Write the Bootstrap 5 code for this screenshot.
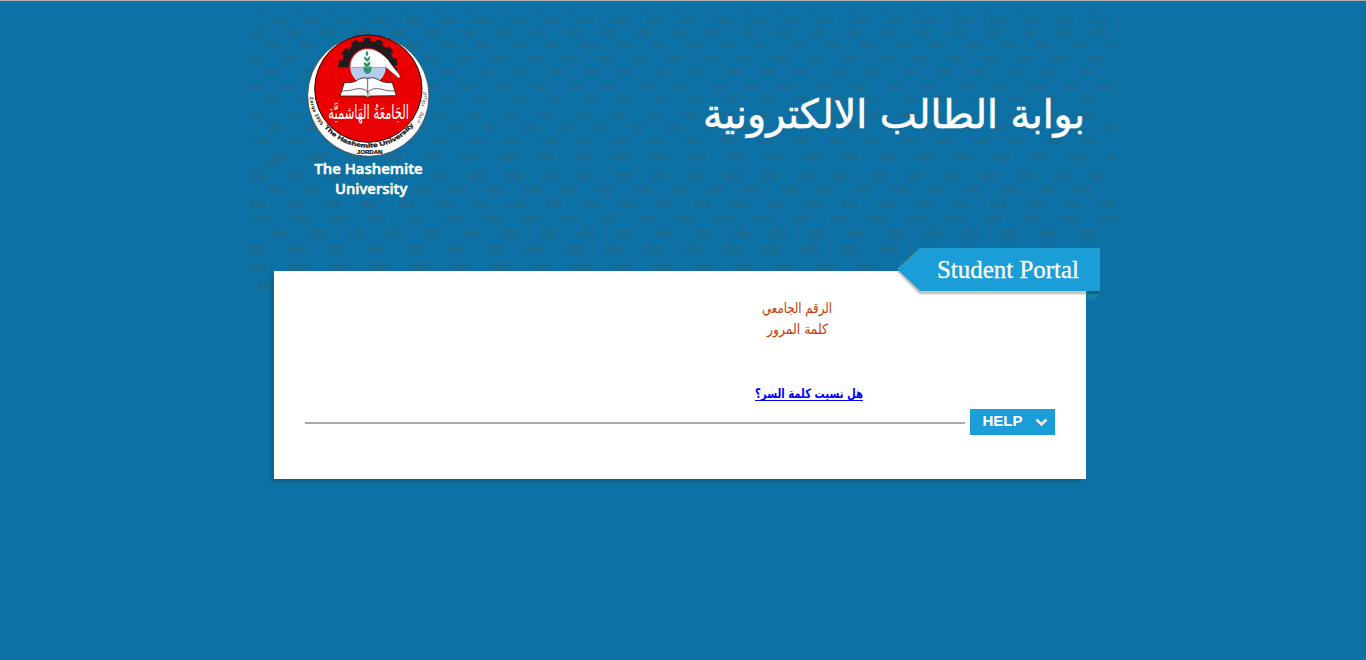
<!DOCTYPE html>
<html lang="ar">
<head>
<meta charset="utf-8">
<meta name="viewport" content="width=device-width, initial-scale=1">
<title>بوابة الطالب الالكترونية</title>
<link href="https://cdn.jsdelivr.net/npm/bootstrap@5.3.0/dist/css/bootstrap.min.css" rel="stylesheet">
<style>
body{background:#0d71a5;border-top:1px solid #a9afb3;min-height:660px;overflow:hidden;font-family:"Liberation Sans","DejaVu Sans",sans-serif}
.portal{width:872px}
.masthead{height:270px;padding:29px 30px 0 58px}
.dots{left:0;top:0;z-index:0;pointer-events:none}
.seal{width:128px;height:170px;overflow:visible}
.site-title{width:386px;height:60px;margin-top:54px;overflow:visible}
.panel{width:812px;height:208px;margin-left:27px;box-shadow:-4px 4px 2px -1px #0b6688}
.ribbon{left:623px;top:-23px;width:204px;height:54px;z-index:2}
.fields{padding:27px 31px 0}
.field-name{color:#c63a08;font:14px/21px "DejaVu Sans",sans-serif;padding-left:457px}
.forgot{color:#00f;font:bold 13px/18px "DejaVu Sans",sans-serif;width:108px;height:18px;margin:44px 0 0 450px}
.forgot svg,.field-name svg{overflow:visible}
.help-row{height:30px;margin-top:5px}
.rule{height:2px;background:#aaa;width:660px;margin-top:2px}
.help-btn{width:85px;height:26px;background:#1b9dd8;color:#fff;font-size:15px;font-weight:bold;line-height:24px;border:0;border-radius:0;padding:0 7px 0 12.5px}
.help-btn span{margin-top:-2px}
</style>
</head>
<body>
<div class="portal mx-auto position-relative">
  <svg class="dots position-absolute" width="872" height="292" viewBox="247 1 872 292" fill="none" stroke="#176c96" stroke-width="6" stroke-linecap="round">
    <path stroke-width="2" stroke-dasharray="12 22.5" d="M257 10.5H1105"/>
    <path stroke-dasharray="10 24.3" d="M272 20.5H1113"/>
    <path stroke-dasharray="10 25" d="M253 32.5H1113"/>
    <path stroke-dasharray="10 25" d="M268 45.5H1113"/>
    <path stroke-dasharray="10 25" d="M250 58.5H1113"/>
    <path stroke-dasharray="10 25.3" d="M268 72H1113"/>
    <path stroke-dasharray="10 25.5" d="M250 86.5H1113"/>
    <path stroke-width="5" stroke-dasharray="10 25.5" d="M265 99H1113"/>
    <path stroke-dasharray="10 26" d="M254 115.5H1113"/>
    <path stroke-dasharray="10 26.2" d="M270 127.5H1113"/>
    <path stroke-dasharray="10 26" d="M256 141H1113"/>
    <path stroke-width="7" stroke-dasharray="11 27" d="M274 157H1113"/>
    <path stroke-dasharray="10 26" d="M267 162.5H300"/>
    <path stroke-width="7" stroke-dasharray="10 26.5" d="M253 176H1113"/>
    <path stroke-width="7" stroke-dasharray="10 26.7" d="M270 190H1113"/>
    <path stroke-width="7" stroke-dasharray="10 27" d="M253 204H1113"/>
    <path stroke-width="7" stroke-dasharray="11 27.5" d="M256 218.5H1113"/>
    <path stroke-width="7" stroke-dasharray="11 27.5" d="M273 233.5H1113"/>
    <path stroke-width="8" stroke-dasharray="11 28.5" d="M252 249.5H1113"/>
    <path stroke-width="8" stroke-dasharray="11 29.5" d="M252 267H900"/>
    <path stroke-width="8" d="M262 285h8"/>
  </svg>

  <header class="masthead d-flex justify-content-between align-items-start position-relative">
    <svg class="seal" viewBox="0 0 384 510">
      <defs>
        <path id="rimBottom" d="M56 290A173 173 0 0 0 330 280"/>
        <path id="rimLeft" d="M14 202A176 176 0 0 0 52 292"/>
        <clipPath id="globe"><circle cx="189" cy="110" r="52"/></clipPath>
      </defs>
      <circle cx="190" cy="197" r="182" fill="#fff" stroke="#222" stroke-width="2"/>
      <circle cx="190" cy="176" r="161" fill="#ea0000" stroke="#111" stroke-width="3"/>
      <g fill="none" stroke="#211b20">
        <path stroke-width="22" d="M120 112A69 69 0 0 1 258 112"/>
        <path stroke-width="18" stroke-dasharray="20 17.3" d="M109 112A80 80 0 0 1 269 112"/>
      </g>
      <path d="M226 57Q252 77 264 112L276 112 276 130 249 112Z" fill="#211b20"/>
      <circle cx="189" cy="110" r="54" fill="#fff" stroke="#a41b20" stroke-width="2"/>
      <path clip-path="url(#globe)" fill="#b5cdef" d="M130 112H250V170H130Z"/>
      <path d="M136 112H243" stroke="#7291c6" stroke-width="2"/>
      <path d="M206 61Q240 73 258 103L284 136Q289 147 278 143L242 112 238 89Z" fill="#fff"/>
      <path d="M242 112L279 143Q289 146 284 135" fill="none" stroke="#222" stroke-width="2"/>
      <g fill="#32916a">
        <path d="M186 62q8 9 0 17q-8-8 0-17Z"/>
        <path d="M177 79q6 2 9 7q3-5 9-8q1 14-9 17q-9-3-9-16Z"/>
        <path d="M176 95q7 2 10 7q4-6 10-8q1 15-10 18q-10-3-10-17Z"/>
        <path d="M175 110q9 0 12 5q4-6 13-5q1 19-13 22q-12-3-12-22Z"/>
      </g>
      <path d="M118 158Q148 160 160 148Q176 140 189 145Q205 139 218 148Q236 160 262 158L274 197 197 198 188 202 180 198 105 198Z" fill="#fff" stroke="#211b20" stroke-width="2.5"/>
      <path d="M188 146V188M110 183Q137 183 151 177Q175 172 188 186Q203 172 226 177Q243 184 269 183" fill="none" stroke="#211b20" stroke-width="2"/>
      <path d="M188 186q9 8 2 16q-7-6-2-16Z" fill="#fff" stroke="#211b20" stroke-width="1.5"/>
      <text transform="translate(312 266) scale(1 1.25)" direction="rtl" textLength="242" lengthAdjust="spacingAndGlyphs" font-family="DejaVu Sans" font-size="46" fill="#fff">الجَامعَةُ الهَاشميَّة</text>
      <g fill="#111" font-family="Liberation Sans" font-weight="bold">
        <text font-size="18" stroke="#111" stroke-width=".8"><textPath href="#rimBottom" startOffset="2" textLength="308" lengthAdjust="spacingAndGlyphs">The Hashemite University</textPath></text>
        <text font-size="15"><textPath href="#rimLeft" textLength="92">Zarqa 1995</textPath></text>
        <text x="194" y="373" text-anchor="middle" font-size="16" textLength="77" lengthAdjust="spacingAndGlyphs" stroke="#111" stroke-width=".7">JORDAN</text>
      </g>
      <text transform="translate(342 280) rotate(-62)" font-family="DejaVu Sans" font-size="17" fill="#444" textLength="34" lengthAdjust="spacingAndGlyphs">١٩٩٥م</text>
      <text transform="translate(358 230) rotate(-80)" font-family="DejaVu Sans" font-size="18" fill="#444" textLength="43" lengthAdjust="spacingAndGlyphs">الزرقاء</text>
      <g fill="#fff" font-family="Open Sans" font-weight="600" font-size="44" stroke="#fff" stroke-width="1.5">
        <text x="28" y="432" textLength="325" lengthAdjust="spacingAndGlyphs">The Hashemite</text>
        <text x="90" y="492" textLength="217" lengthAdjust="spacingAndGlyphs">University</text>
      </g>
    </svg>
    <svg class="site-title" viewBox="0 0 386 60">
      <text x="382" y="44" direction="rtl" textLength="382" lengthAdjust="spacingAndGlyphs" font-family="DejaVu Sans" font-size="40" fill="#fff" stroke="#fff" stroke-width=".6">بوابة الطالب الالكترونية</text>
    </svg>
  </header>

  <main class="panel bg-white position-relative">
    <div class="ribbon position-absolute">
      <svg width="204" height="54" viewBox="0 0 204 54">
        <defs><filter id="soft"><feGaussianBlur stdDeviation="1.2"/></filter></defs>
        <path d="M1 22L23 44.500H190" fill="none" stroke="#555" stroke-width="2" stroke-opacity=".65" filter="url(#soft)"/>
        <path d="M190 43H203L195 52H190Z" fill="#1382a2"/>
        <path d="M190 43H203L201 46H190Z" fill="#17606f"/>
        <path d="M202 45L195 52" stroke="#577e58"/>
        <path d="M0 21L23 0H203V43H23Z" fill="#1b9dd8"/>
        <path d="M0 21L23 0" stroke="#54836a"/>
        <text x="40" y="30" textLength="142" lengthAdjust="spacingAndGlyphs" font-family="Liberation Serif" font-size="25" fill="#fff" stroke="#fff" stroke-width=".3">Student Portal</text>
      </svg>
    </div>
    <div class="fields d-flex flex-column">
      <div class="field-name d-flex flex-column">
        <svg width="70" height="21"><text x="70" y="15" direction="rtl" textLength="70" lengthAdjust="spacingAndGlyphs" fill="#c63a08">الرقم الجامعي</text></svg>
        <svg width="70" height="21"><text x="66" y="15" direction="rtl" textLength="61" lengthAdjust="spacingAndGlyphs" fill="#c63a08">كلمة المرور</text></svg>
      </div>
      <a href="#" class="forgot d-block"><svg class="d-block" width="108" height="18"><text x="108" y="14" direction="rtl" textLength="108" lengthAdjust="spacingAndGlyphs" fill="#00f">هل نسيت كلمة السر؟</text><path d="M0 16.5H108" stroke="#00f"/></svg></a>
      <div class="help-row d-flex align-items-center justify-content-between">
        <div class="rule"></div>
        <button class="help-btn d-flex align-items-center justify-content-between" type="button"><span>HELP</span>
          <svg width="13" height="10" viewBox="0 0 13 10"><path d="M1.500 2.500L6.500 7.500L11.500 2.500" fill="none" stroke="#f5e9e5" stroke-width="2.500"/></svg>
        </button>
      </div>
    </div>
  </main>
</div>
<script src="https://cdn.jsdelivr.net/npm/bootstrap@5.3.0/dist/js/bootstrap.bundle.min.js"></script>
</body>
</html>
